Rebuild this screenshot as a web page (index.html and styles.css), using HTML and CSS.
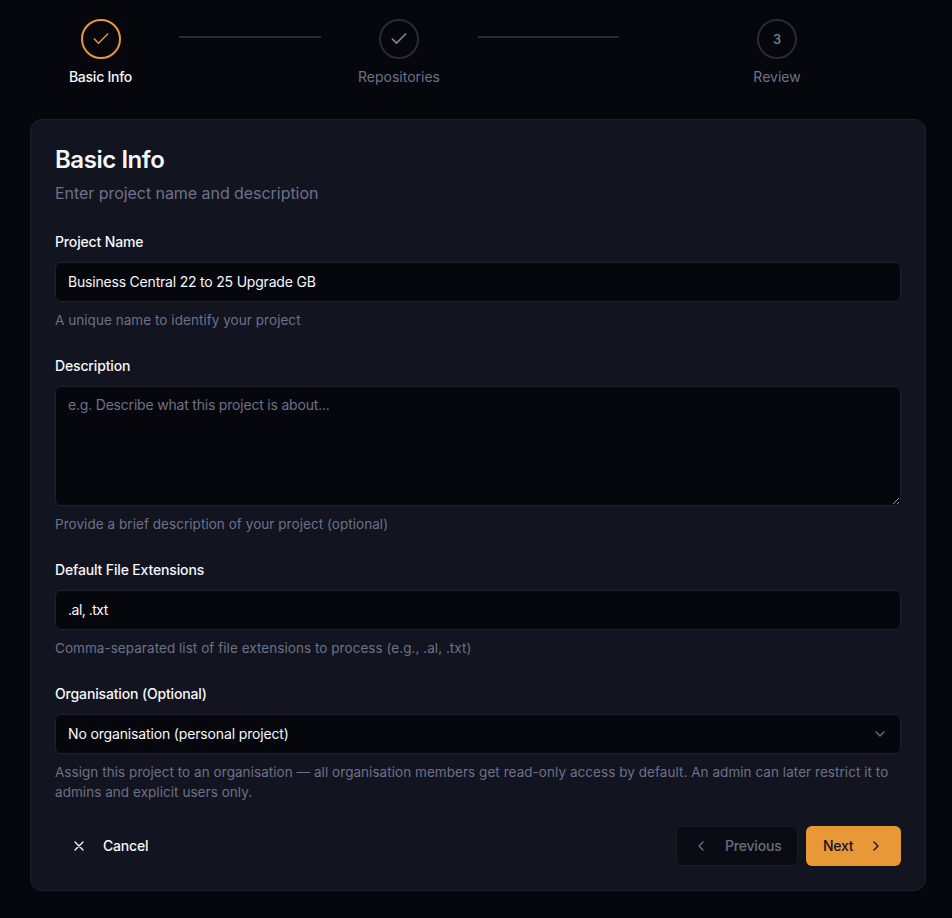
FILE: index.html
```html
<!DOCTYPE html>
<html lang="en">
<head>
  <meta charset="UTF-8" />
  <title>New Project</title>
  <link rel="stylesheet" href="styles.css">
</head>
<body>

  <!-- Stepper -->
  <div class="stepper">
    <div class="step step-first">
      <div class="circle circle-active">
        <svg width="20" height="20" viewBox="0 0 24 24" class="check"><path d="M20 6 9 17l-5-5"/></svg>
      </div>
      <span class="step-label step-label-active">Basic Info</span>
    </div>
    <div class="line line-one"></div>
    <div class="step step-second">
      <div class="circle">
        <svg width="20" height="20" viewBox="0 0 24 24" class="check"><path d="M20 6 9 17l-5-5"/></svg>
      </div>
      <span class="step-label">Repositories</span>
    </div>
    <div class="line line-two"></div>
    <div class="step step-third">
      <div class="circle">3</div>
      <span class="step-label">Review</span>
    </div>
  </div>

  <!-- Form card -->
  <div class="card">
    <h2>Basic Info</h2>
    <p class="subtitle">Enter project name and description</p>

    <div class="field">
      <label for="projectName">Project Name</label>
      <input type="text" id="projectName" value="Business Central 22 to 25 Upgrade GB" />
      <p class="hint">A unique name to identify your project</p>
    </div>

    <div class="field">
      <label for="description">Description</label>
      <textarea id="description" placeholder="e.g. Describe what this project is about..."></textarea>
      <p class="hint">Provide a brief description of your project (optional)</p>
    </div>

    <div class="field">
      <label for="extensions">Default File Extensions</label>
      <input type="text" id="extensions" class="input-tight" value=".al, .txt" />
      <p class="hint">Comma-separated list of file extensions to process (e.g., .al, .txt)</p>
    </div>

    <div class="field">
      <label for="organisation">Organisation (Optional)</label>
      <div class="select-wrap">
        <select id="organisation">
          <option>No organisation (personal project)</option>
        </select>
        <svg width="16" height="16" viewBox="0 0 24 24" class="select-icon"><path d="m6 9 6 6 6-6"/></svg>
      </div>
      <p class="hint">Assign this project to an organisation — all organisation members get read-only access by default. An admin can later restrict it to admins and explicit users only.</p>
    </div>

    <div class="actions">
      <button class="btn btn-cancel">
        <svg width="16" height="16" viewBox="0 0 24 24"><path d="M18 6 6 18M6 6l12 12"/></svg>
        Cancel
      </button>
      <div class="actions-right">
        <button class="btn btn-prev">
          <svg width="16" height="16" viewBox="0 0 24 24"><path d="m15 18-6-6 6-6"/></svg>
          Previous
        </button>
        <button class="btn btn-next">
          Next
          <svg width="16" height="16" viewBox="0 0 24 24"><path d="m9 18 6-6-6-6"/></svg>
        </button>
      </div>
    </div>
  </div>

</body>
</html>
```

FILE: styles.css
```css
* { margin: 0; padding: 0; box-sizing: border-box; }
body { font-family: 'Inter', 'Liberation Sans', sans-serif; background: #06070d; color: #f5f7fa; height: 918px; overflow: hidden; padding: 19px 26px 0 30px; font-size: 14px; }

svg { fill: none; stroke: currentColor; stroke-width: 2; stroke-linecap: round; stroke-linejoin: round; flex-shrink: 0; }

/* Stepper */
.stepper { display: flex; align-items: flex-start; padding-left: 39px; height: 100px; }
.step { display: flex; flex-direction: column; align-items: center; gap: 8px; }
.step-first { width: 63px; }
.step-second { width: 82px; }
.step-third { width: 46px; }
.circle { width: 40px; height: 40px; border-radius: 50%; border: 2px solid #282a36; color: #7e8398; display: flex; align-items: center; justify-content: center; font-size: 13px; font-weight: 500; }
.circle-active { border-color: #e99838; color: #e99838; }
.circle-active svg { stroke-width: 1.7; }
.step-label { font-size: 14px; line-height: 20px; color: #6d7189; white-space: nowrap; }
.step-label-active { color: #f5f7fa; font-weight: 500; letter-spacing: -0.25px; }
.line { height: 2px; background: #282a36; }
.line-one { width: 142px; margin: 17px 37px 0 47px; }
.line-two { width: 141px; margin: 17px 135px 0 38px; }

/* Card */
.card { background: #12141f; border: 1px solid #1e202c; border-radius: 12px; padding: 24px; height: 772px; }
.card h2 { font-size: 24px; line-height: 32px; font-weight: 600; letter-spacing: -0.45px; }
.subtitle { font-size: 16px; line-height: 24px; color: #6d7189; margin-top: 5px; letter-spacing: -0.05px; }

.field { margin-bottom: 26px; }
.subtitle + .field { margin-top: 27px; }
.field label { display: block; font-size: 14px; line-height: 20px; font-weight: 500; margin-bottom: 10px; letter-spacing: -0.15px; }
.field input, .field textarea, .field select {
  display: block; width: 100%; height: 40px; padding: 0 12px 1px; background: #06070d; color: #f5f7fa; border: 1px solid #1e202c; border-radius: 6px; font-family: inherit; font-size: 14px; letter-spacing: -0.2px; outline: none;
}
.field .input-tight { letter-spacing: -0.5px; }
.field textarea { height: 120px; padding: 8px 12px; line-height: 20px; resize: vertical; }
.field textarea::placeholder { color: #6d7189; }
.field select { appearance: none; letter-spacing: -0.15px; }
.select-wrap { position: relative; }
.select-icon { position: absolute; right: 13px; top: 12px; color: #6b6e7a; }
.hint { font-size: 13.5px; line-height: 20px; color: #6d7189; margin-top: 8px; letter-spacing: 0.05px; }

/* Buttons */
.actions { display: flex; justify-content: space-between; margin-top: -2px; }
.actions-right { display: flex; gap: 8px; }
.btn { height: 40px; display: flex; align-items: center; gap: 16px; padding: 0 16px 1px; border: 1px solid transparent; border-radius: 6px; background: none; color: #f5f7fa; font-family: inherit; font-size: 14px; font-weight: 500; letter-spacing: -0.2px; cursor: pointer; }
.btn-cancel { border: none; }
.btn-prev { width: 122px; background: #0a0c14; border-color: #181a25; color: #6b6e7a; }
.btn-next { width: 95px; gap: 15px; background: #e99838; color: #12141f; letter-spacing: -0.3px; }
```
